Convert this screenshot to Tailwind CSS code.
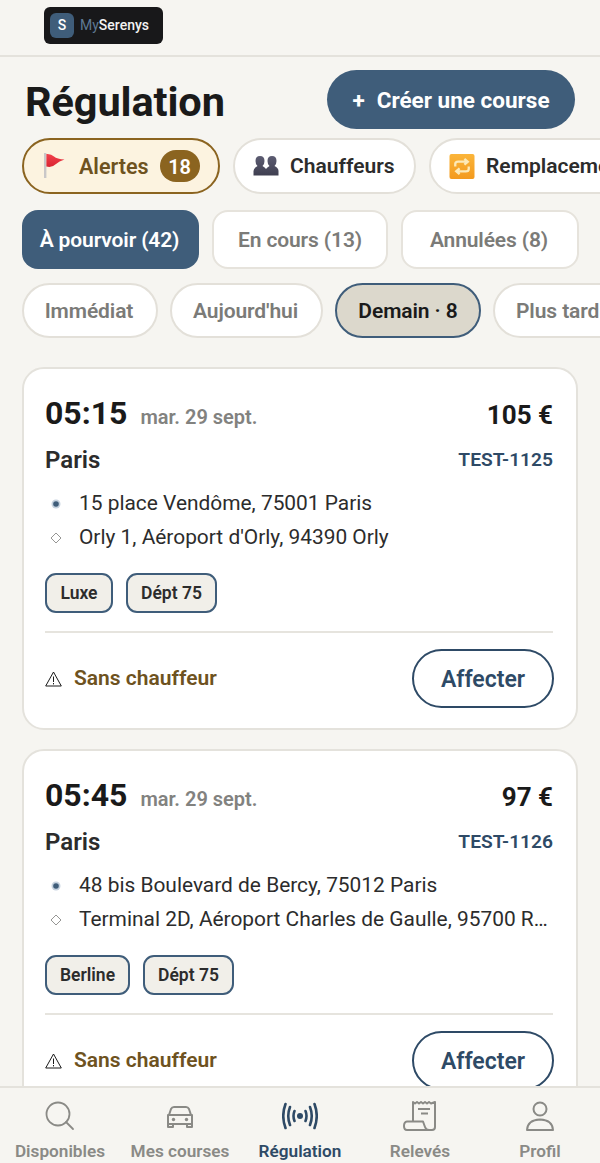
<!DOCTYPE html>
<html>

<head>
    <title>Régulation</title>
    <script src="https://cdn.jsdelivr.net/npm/@tailwindcss/browser@4"></script>
</head>

<body class="bg-[#f6f5f1] font-['Roboto',sans-serif]">
    <div class="flex flex-col w-[600px] h-[1163px] overflow-hidden">

        <!-- Top bar -->
        <header class="shrink-0 h-[57px] border-b-2 border-[#e4e2dc] pl-[44px] pt-[7px]">
            <div class="flex items-center w-[119px] h-[37px] rounded-[6px] bg-[#18181a] pl-[6px]">
                <div class="flex items-center justify-center w-[24px] h-[25px] rounded-[6px] bg-[#3f5d7a] text-white text-[14px] font-medium">S</div>
                <span class="ml-[6px] text-[14px] text-[#5f7a94]">My<span class="text-[#f2f2f2] font-medium">Serenys</span></span>
            </div>
        </header>

        <main class="flex-1 min-h-0 overflow-hidden">

            <!-- Title -->
            <div class="flex items-center justify-between pl-[25px] pr-[25px] pt-[13px]">
                <h1 class="h-[59px] pt-[2px] text-[41.5px] leading-[59px] font-bold text-[#1a1a1a] tracking-[-0.1px]">Régulation</h1>
                <button class="flex items-center justify-center w-[248px] h-[59px] pt-[3px] rounded-full bg-[#3f5d7a] text-white text-[22.5px] font-bold">
                    <span class="mr-[12px]">+</span>Créer une course
                </button>
            </div>

            <!-- Sections -->
            <div class="flex gap-[13px] pl-[22px] mt-[9px] whitespace-nowrap">
                <div class="shrink-0 flex items-center w-[198px] h-[56px] rounded-full border-2 border-[#8b6420] bg-[#fcf3e0] pl-[19px]">
                    <svg class="w-[26px] h-[26px]" viewBox="0 0 26 26">
                        <defs>
                            <linearGradient id="flag-red" x1="0" y1="0" x2="0" y2="1">
                                <stop offset="0" stop-color="#f2414c" />
                                <stop offset="1" stop-color="#d92433" />
                            </linearGradient>
                        </defs>
                        <rect x="1" y="0" width="2.400" height="25" fill="#c9c7c8" />
                        <path d="M3.400 1 Q8 0.500 11 3.500 Q14 6 21.500 6.500 Q16 8 13 11 Q9 15 3.400 13.500 Z" fill="url(#flag-red)" />
                    </svg>
                    <span class="pt-[2px] ml-[10px] text-[21.5px] font-semibold text-[#6e5220]">Alertes</span>
                    <span class="ml-[11px] flex items-center justify-center w-[40px] h-[32px] pt-[1px] rounded-full bg-[#8b6420] text-white text-[20px] font-semibold">18</span>
                </div>
                <div class="shrink-0 flex items-center w-[183px] h-[56px] rounded-full border-2 border-[#e3e0d9] bg-white pl-[18px]">
                    <svg class="w-[26px] h-[22px]" viewBox="0 0 26 22">
                        <defs>
                            <linearGradient id="busts" x1="0" y1="0" x2="0" y2="1">
                                <stop offset="0" stop-color="#5c5c72" />
                                <stop offset="1" stop-color="#3f3f50" />
                            </linearGradient>
                        </defs>
                        <path d="M7 1 Q11.500 1 11.500 6 Q11.500 9.500 9.500 11 Q12 12.500 13 14 Q14 12.500 16.500 11 Q14.500 9.500 14.500 6 Q14.500 1 19 1 Q23.500 1 23.500 6 Q23.500 9.500 21.500 11 Q25.500 13 25.500 16 V20.500 H0.500 V16 Q0.500 13 4.500 11 Q2.500 9.500 2.500 6 Q2.500 1 7 1 Z" fill="url(#busts)" />
                    </svg>
                    <span class="pt-[2px] ml-[11px] text-[21px] font-semibold text-[#2c2c2c]">Chauffeurs</span>
                </div>
                <div class="shrink-0 flex items-center w-[220px] h-[56px] rounded-full border-2 border-[#e3e0d9] bg-white pl-[18px]">
                    <svg class="w-[26px] h-[25px]" viewBox="0 0 26 26">
                        <defs>
                            <linearGradient id="repeat-bg" x1="0" y1="0" x2="0" y2="1">
                                <stop offset="0" stop-color="#fbb53a" />
                                <stop offset="1" stop-color="#f39a1e" />
                            </linearGradient>
                        </defs>
                        <rect width="26" height="26" rx="2" fill="url(#repeat-bg)" />
                        <path d="M6 13 V10.500 Q6 8 9 8 H18 M15.500 5 L19 8 L15.500 11" fill="none" stroke="#fdeab8" stroke-width="2.400" />
                        <path d="M20 13 V15.500 Q20 18 17 18 H8 M10.500 15 L7 18 L10.500 21" fill="none" stroke="#fdeab8" stroke-width="2.400" />
                    </svg>
                    <span class="pt-[2px] ml-[11px] text-[21px] font-semibold text-[#2c2c2c]">Remplacements</span>
                </div>
            </div>

            <!-- Status tabs -->
            <div class="flex gap-[13px] pl-[22px] mt-[16px] whitespace-nowrap">
                <div class="flex items-center justify-center w-[177px] h-[59px] pt-[3px] pr-[2px] rounded-[16px] bg-[#3f5d7a] text-white text-[21px] tracking-[-0.12px] font-semibold">À pourvoir (42)</div>
                <div class="flex items-center justify-center w-[176px] h-[59px] pt-[3px] rounded-[16px] border-2 border-[#e6e3dc] bg-white text-[#7b7b78] text-[21px] tracking-[-0.12px] font-semibold">En cours (13)</div>
                <div class="flex items-center justify-center w-[178px] h-[59px] pt-[3px] pr-[2px] rounded-[16px] border-2 border-[#e6e3dc] bg-white text-[#7b7b78] text-[21px] tracking-[-0.12px] font-semibold">Annulées (8)</div>
            </div>

            <!-- Time filters -->
            <div class="flex gap-[12px] pl-[22px] mt-[14px] whitespace-nowrap">
                <div class="shrink-0 flex items-center justify-center w-[136px] h-[55px] pt-[2px] pr-[2px] rounded-full border-2 border-[#e3e0d9] bg-white text-[#7b7b78] text-[21px] tracking-[-0.1px] font-semibold">Immédiat</div>
                <div class="shrink-0 flex items-center justify-center w-[153px] h-[55px] pt-[2px] pr-[2px] rounded-full border-2 border-[#e3e0d9] bg-white text-[#7b7b78] text-[21px] tracking-[-0.1px] font-semibold">Aujourd'hui</div>
                <div class="shrink-0 flex items-center justify-center w-[146px] h-[55px] pt-[2px] rounded-full border-2 border-[#3f5d7a] bg-[#dcd8cc] text-[#1a1a1a] text-[21px] tracking-[-0.1px] font-semibold">Demain · 8</div>
                <div class="shrink-0 flex items-center w-[140px] h-[55px] pt-[2px] rounded-full border-2 border-[#e3e0d9] bg-white pl-[21px] text-[#7b7b78] text-[21px] tracking-[-0.1px] font-semibold">Plus tard</div>
            </div>

            <!-- Card 1 -->
            <article class="mx-[22px] mt-[29px] h-[363px] rounded-[22px] border-2 border-[#e4e2dc] bg-white pl-[21px] pr-[23px] pt-[20px]">
                <div class="flex items-baseline justify-between h-[38px]">
                    <div class="flex items-baseline">
                        <span class="text-[32px] font-bold text-[#1a1a1a]">05:15</span>
                        <span class="ml-[13px] text-[20px] font-semibold text-[#82827f]">mar. 29 sept.</span>
                    </div>
                    <span class="text-[26px] font-bold text-[#1a1a1a]">105 €</span>
                </div>
                <div class="flex items-center justify-between mt-[16px] h-[34px]">
                    <span class="text-[24px] font-semibold text-[#2c2c2c]">Paris</span>
                    <span class="text-[19.2px] font-semibold text-[#2e4a66]">TEST-1125</span>
                </div>
                <div class="flex items-center mt-[10px] h-[34px]">
                    <svg class="shrink-0 w-[22px] h-[12px]" viewBox="0 0 22 12"><circle cx="11" cy="6" r="4.500" fill="#c6d2df" /><circle cx="11" cy="6" r="2.800" fill="#3f5d7a" /></svg>
                    <span class="ml-[12px] text-[20.9px] text-[#2c2c2c]">15 place Vendôme, 75001 Paris</span>
                </div>
                <div class="flex items-center h-[34px]">
                    <svg class="shrink-0 w-[22px] h-[12px]" viewBox="0 0 22 12"><path d="M11 1 L16 6 L11 11 L6 6 Z" fill="none" stroke="#8a8a88" stroke-width="0.900" /></svg>
                    <span class="ml-[12px] text-[20.9px] text-[#2c2c2c]">Orly 1, Aéroport d'Orly, 94390 Orly</span>
                </div>
                <div class="flex gap-[13px] mt-[18px]">
                    <span class="flex items-center justify-center w-[68px] h-[40px] rounded-[11px] border-2 border-[#3f5d7a] bg-[#f1efe9] text-[17.5px] font-semibold text-[#2c2c2c]">Luxe</span>
                    <span class="flex items-center justify-center w-[91px] h-[40px] rounded-[11px] border-2 border-[#3f5d7a] bg-[#f1efe9] text-[17.5px] font-semibold text-[#2c2c2c]">Dépt 75</span>
                </div>
                <div class="mt-[18px] border-t-2 border-[#e6e4de]"></div>
                <div class="flex items-center justify-between mt-[16px] -mr-[1px]">
                    <div class="flex items-center">
                        <svg class="w-[17px] h-[16px]" viewBox="0 0 17 16"><path d="M8.500 1 L16.300 15 H0.700 Z" fill="none" stroke="#1a1a1a" stroke-width="1" /><path d="M8.500 5.500 V11 M8.500 12 V13.400" stroke="#1a1a1a" stroke-width="1" /></svg>
                        <span class="ml-[12px] pt-[1px] text-[21px] font-semibold text-[#6e5220]">Sans chauffeur</span>
                    </div>
                    <button class="w-[142px] h-[59px] pt-[4px] rounded-full border-2 border-[#2e4a66] bg-white text-[23px] font-semibold text-[#2e4a66]">Affecter</button>
                </div>
            </article>

            <!-- Card 2 -->
            <article class="mx-[22px] mt-[19px] h-[363px] rounded-[22px] border-2 border-[#e4e2dc] bg-white pl-[21px] pr-[23px] pt-[20px]">
                <div class="flex items-baseline justify-between h-[38px]">
                    <div class="flex items-baseline">
                        <span class="text-[32px] font-bold text-[#1a1a1a]">05:45</span>
                        <span class="ml-[13px] text-[20px] font-semibold text-[#82827f]">mar. 29 sept.</span>
                    </div>
                    <span class="text-[26px] font-bold text-[#1a1a1a]">97 €</span>
                </div>
                <div class="flex items-center justify-between mt-[16px] h-[34px]">
                    <span class="text-[24px] font-semibold text-[#2c2c2c]">Paris</span>
                    <span class="text-[19.2px] font-semibold text-[#2e4a66]">TEST-1126</span>
                </div>
                <div class="flex items-center mt-[10px] h-[34px]">
                    <svg class="shrink-0 w-[22px] h-[12px]" viewBox="0 0 22 12"><circle cx="11" cy="6" r="4.500" fill="#c6d2df" /><circle cx="11" cy="6" r="2.800" fill="#3f5d7a" /></svg>
                    <span class="ml-[12px] text-[20.9px] text-[#2c2c2c]">48 bis Boulevard de Bercy, 75012 Paris</span>
                </div>
                <div class="flex items-center h-[34px]">
                    <svg class="shrink-0 w-[22px] h-[12px]" viewBox="0 0 22 12"><path d="M11 1 L16 6 L11 11 L6 6 Z" fill="none" stroke="#8a8a88" stroke-width="0.900" /></svg>
                    <span class="ml-[12px] min-w-0 truncate text-[20.9px] text-[#2c2c2c]">Terminal 2D, Aéroport Charles de Gaulle, 95700 Roissy-en-France</span>
                </div>
                <div class="flex gap-[13px] mt-[18px]">
                    <span class="flex items-center justify-center w-[85px] h-[40px] rounded-[11px] border-2 border-[#3f5d7a] bg-[#f1efe9] text-[17.5px] font-semibold text-[#2c2c2c]">Berline</span>
                    <span class="flex items-center justify-center w-[91px] h-[40px] rounded-[11px] border-2 border-[#3f5d7a] bg-[#f1efe9] text-[17.5px] font-semibold text-[#2c2c2c]">Dépt 75</span>
                </div>
                <div class="mt-[18px] border-t-2 border-[#e6e4de]"></div>
                <div class="flex items-center justify-between mt-[16px] -mr-[1px]">
                    <div class="flex items-center">
                        <svg class="w-[17px] h-[16px]" viewBox="0 0 17 16"><path d="M8.500 1 L16.300 15 H0.700 Z" fill="none" stroke="#1a1a1a" stroke-width="1" /><path d="M8.500 5.500 V11 M8.500 12 V13.400" stroke="#1a1a1a" stroke-width="1" /></svg>
                        <span class="ml-[12px] pt-[1px] text-[21px] font-semibold text-[#6e5220]">Sans chauffeur</span>
                    </div>
                    <button class="w-[142px] h-[59px] pt-[4px] rounded-full border-2 border-[#2e4a66] bg-white text-[23px] font-semibold text-[#2e4a66]">Affecter</button>
                </div>
            </article>
        </main>

        <!-- Bottom nav -->
        <nav class="shrink-0 h-[77px] border-t-2 border-[#e4e2dc] bg-[#f6f5f1] grid grid-cols-5 pt-[13px] whitespace-nowrap">
            <div class="flex flex-col items-center text-[#8a8a86]">
                <svg class="w-[30px] h-[30px]" viewBox="0 0 30 30" fill="none" stroke="currentColor" stroke-width="1.800" stroke-linecap="round">
                    <circle cx="13" cy="13" r="11.500" /><path d="M21 21 L28 28" />
                </svg>
                <span class="mt-[9px] text-[17.2px] leading-[22px] font-semibold">Disponibles</span>
            </div>
            <div class="flex flex-col items-center text-[#8a8a86]">
                <svg class="w-[30px] h-[30px]" viewBox="0 0 30 30" fill="none" stroke="currentColor" stroke-width="2" stroke-linejoin="round">
                    <path d="M4 14 L6 8 Q7 6 9 6 H21 Q23 6 24 8 L26 14 M3 14 H27 V23 H3 Z M3 23 V26 H8 V23 M22 23 V26 H27 V23" />
                    <circle cx="8.500" cy="18.500" r="1.700" fill="currentColor" stroke="none" /><circle cx="21.500" cy="18.500" r="1.700" fill="currentColor" stroke="none" />
                </svg>
                <span class="mt-[9px] text-[17.2px] leading-[22px] font-semibold">Mes courses</span>
            </div>
            <div class="flex flex-col items-center text-[#2e4a66]">
                <svg class="w-[36px] h-[30px]" viewBox="0 0 36 30" fill="none" stroke="currentColor" stroke-width="2.600" stroke-linecap="round">
                    <circle cx="18" cy="15" r="3" fill="currentColor" stroke="none" />
                    <path d="M12.500 10 Q10.500 15 12.500 20 M23.500 10 Q25.500 15 23.500 20 M8 6 Q4.500 15 8 24 M28 6 Q31.500 15 28 24 M3.500 3 Q-1 15 3.500 27 M32.500 3 Q37 15 32.500 27" />
                </svg>
                <span class="mt-[9px] text-[17.2px] leading-[22px] font-semibold">Régulation</span>
            </div>
            <div class="flex flex-col items-center text-[#8a8a86]">
                <svg class="w-[34px] h-[30px]" viewBox="0 0 34 30" fill="none" stroke="currentColor" stroke-width="2" stroke-linejoin="round">
                    <path d="M10 20 V1 L12 2.500 L14 1 L16 2.500 L18 1 L20 2.500 L22 1 L24 2.500 L26 1 L28 2.500 L32 1 V26 Q32 29 29 29 H26 Q23 29 22 26 L20 20.500 H4 Q1 21 1 25 Q1 29 4 29 H26" />
                    <path d="M15 8 H27 M18 12.500 H25" />
                </svg>
                <span class="mt-[9px] text-[17.2px] leading-[22px] font-semibold">Relevés</span>
            </div>
            <div class="flex flex-col items-center text-[#8a8a86]">
                <svg class="w-[30px] h-[30px]" viewBox="0 0 30 30" fill="none" stroke="currentColor" stroke-width="2">
                    <circle cx="15" cy="8" r="6.500" /><path d="M2 29 Q2.500 19 15 18.500 Q27.500 19 28 29 Z" stroke-linejoin="round" />
                </svg>
                <span class="mt-[9px] text-[17.2px] leading-[22px] font-semibold">Profil</span>
            </div>
        </nav>
    </div>
</body>

</html>
